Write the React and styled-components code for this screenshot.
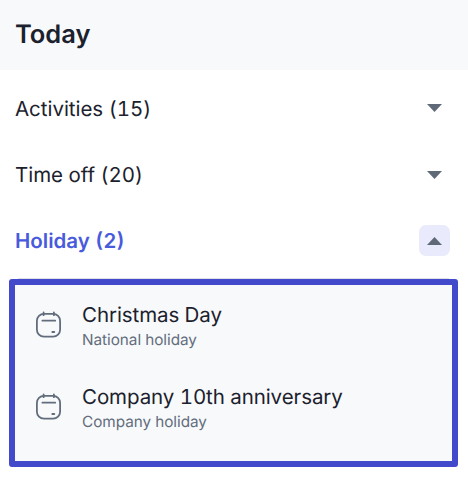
import React, { useState } from 'react';
import styled, { createGlobalStyle } from 'styled-components';

const GlobalStyle = createGlobalStyle`
  * {
    box-sizing: border-box;
  }
  body {
    margin: 0;
    background: #ffffff;
    font-family: Inter, "Liberation Sans", sans-serif;
    font-variant-numeric: tabular-nums;
    text-rendering: geometricPrecision;
    color: #1b212d;
  }
`;

const Panel = styled.main`
  width: 468px;
  height: 480px;
  overflow: hidden;
`;

const Header = styled.header`
  display: flex;
  align-items: center;
  height: 70px;
  padding: 0 15px;
  background: #f8f9fb;
`;

const Title = styled.h1`
  margin: 0;
  font-size: 25.5px;
  font-weight: 600;
  line-height: 32px;
  letter-spacing: 0;
`;

const Sections = styled.div`
  padding-top: 5px;
`;

const SectionRow = styled.div`
  display: flex;
  align-items: center;
  justify-content: space-between;
  height: 66.4px;
  padding: 0 18px 0 15px;
`;

const SectionLabel = styled.span`
  padding-top: 1px;
  font-size: 20.5px;
  line-height: 28px;
  letter-spacing: ${({ $open }) => ($open ? '0' : '-0.03px')};
  font-weight: ${({ $open }) => ($open ? 600 : 400)};
  color: ${({ $open }) => ($open ? '#485bdc' : '#1b212d')};
`;

const Toggle = styled.button`
  display: flex;
  align-items: center;
  justify-content: center;
  width: 31px;
  height: 31px;
  padding: 0;
  border: none;
  border-radius: 7px;
  background: ${({ $open }) => ($open ? '#e9eafb' : 'transparent')};
  cursor: pointer;
`;

const HolidayList = styled.ul`
  display: flex;
  flex-direction: column;
  width: 449px;
  height: 188px;
  margin: 5px 0 0 9px;
  padding: 11px 20px 0;
  list-style: none;
  border: 6px solid #4249cb;
  border-radius: 3px;
  background: #f8f9fb;
  box-shadow: 0 -10px 0 -9px #dcdfe6;
`;

const HolidayItem = styled.li`
  display: flex;
  flex-shrink: 0;
  align-items: center;
  gap: 20px;
  height: 82px;
  padding-bottom: 26.5px;
`;

const HolidayText = styled.div`
  display: flex;
  flex-direction: column;
  padding-top: 4px;
`;

const HolidayName = styled.span`
  font-size: 20.5px;
  line-height: 28px;
  letter-spacing: -0.08px;
`;

const HolidayType = styled.span`
  font-size: 15.3px;
  line-height: 22px;
  letter-spacing: -0.03px;
  color: #626d7c;
`;

const CaretIcon = ({ up }) => (
  <svg width="15" height="8" viewBox="0 0 15 8" fill="#5f6977">
    <path d={up ? 'M0 8L7.5 0L15 8Z' : 'M0 0H15L7.5 8Z'} />
  </svg>
);

const CalendarIcon = () => (
  <svg width="27" height="30" viewBox="0 0 27 30" fill="none" stroke="#626d7c" strokeWidth="1.8" strokeLinecap="round">
    <rect x="1.9" y="4.9" width="23.2" height="22.8" rx="7" />
    <path d="M8.6 3.5V6.2M18.9 3.5V6.2M7.4 11.7H20.2M17.3 23H19.3" />
  </svg>
);

const sections = [
  { id: 'activities', name: 'Activities', count: 15 },
  { id: 'timeoff', name: 'Time off', count: 20 },
  { id: 'holiday', name: 'Holiday', count: 2 },
];

const holidays = [
  { name: 'Christmas Day', type: 'National holiday' },
  { name: 'Company 10th anniversary', type: 'Company holiday' },
];

const App = () => {
  const [openId, setOpenId] = useState('holiday');

  return (
    <Panel>
      <GlobalStyle />
      <Header>
        <Title>Today</Title>
      </Header>
      <Sections>
        {sections.map(({ id, name, count }) => {
          const open = openId === id;
          return (
            <SectionRow key={id}>
              <SectionLabel $open={open}>
                {name} ({count})
              </SectionLabel>
              <Toggle $open={open} onClick={() => setOpenId(open ? null : id)}>
                <CaretIcon up={open} />
              </Toggle>
            </SectionRow>
          );
        })}
        {openId === 'holiday' && (
          <HolidayList>
            {holidays.map((holiday) => (
              <HolidayItem key={holiday.name}>
                <CalendarIcon />
                <HolidayText>
                  <HolidayName>{holiday.name}</HolidayName>
                  <HolidayType>{holiday.type}</HolidayType>
                </HolidayText>
              </HolidayItem>
            ))}
          </HolidayList>
        )}
      </Sections>
    </Panel>
  );
};

export default App;
